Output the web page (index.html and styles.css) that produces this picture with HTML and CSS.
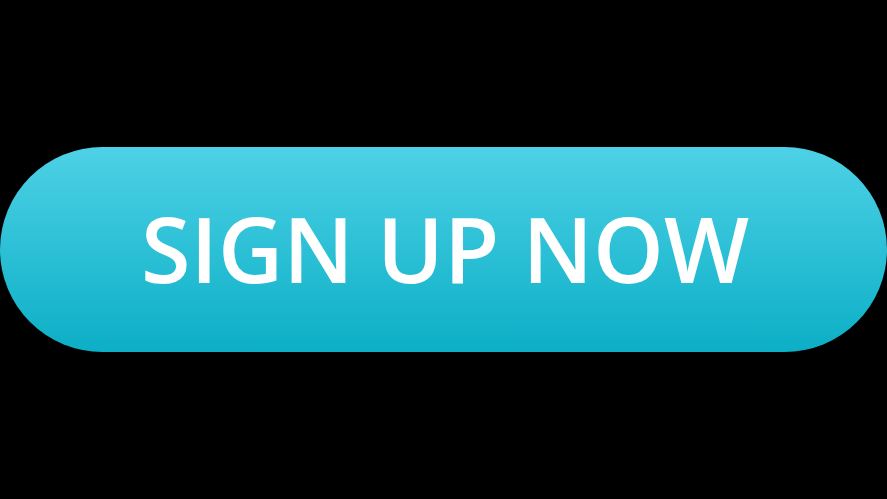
FILE: index.html
```html
<!DOCTYPE html>
<html>
<head>
<meta charset="utf-8">
<link rel="stylesheet" href="styles.css">
</head>
<body>
<div class="page">
  <a class="signup" href="#">SIGN UP NOW</a>
</div>
</body>
</html>
```
FILE: styles.css
```css
html, body {
  margin: 0;
  padding: 0;
  background: #000;
  width: 887px;
  height: 499px;
  overflow: hidden;
}
.page {
  display: flex;
  flex-direction: column;
  align-items: stretch;
  padding-top: 147px;
}
.signup {
  display: flex;
  align-items: center;
  justify-content: center;
  box-sizing: border-box;
  height: 205px;
  border-radius: 103px;
  background: linear-gradient(to bottom, #4ed1e6 0%, #2cc0d6 50%, #0cafc6 100%);
  color: #fff;
  text-decoration: none;
  font-family: "Open Sans", sans-serif;
  font-weight: 600;
  font-size: 90px;
  letter-spacing: 0;
  line-height: 1;
  padding-left: 3px;
  padding-bottom: 4px;
}
```
